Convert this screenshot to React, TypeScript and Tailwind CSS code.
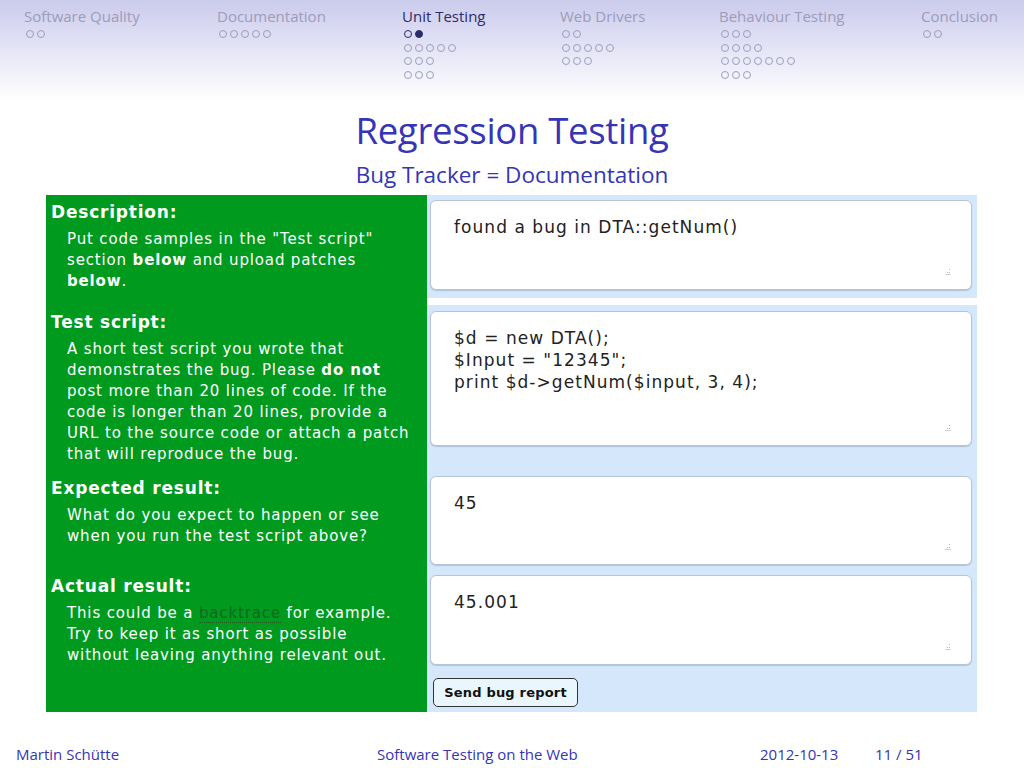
import React from 'react';

type Section = {
  title: string;
  width: string;
  rows: number[];
  active?: boolean;
};

const sections: Section[] = [
  { title: 'Software Quality', width: 'w-[193px]', rows: [2] },
  { title: 'Documentation', width: 'w-[185px]', rows: [5] },
  { title: 'Unit Testing', width: 'w-[158px]', rows: [2, 5, 3, 3], active: true },
  { title: 'Web Drivers', width: 'w-[159px]', rows: [2, 5, 3] },
  { title: 'Behaviour Testing', width: 'w-[202px]', rows: [3, 4, 7, 3] },
  { title: 'Conclusion', width: 'w-[80px]', rows: [2] },
];

const sans = 'font-[Open_Sans,Noto_Sans,sans-serif]';
const deja = 'font-[DejaVu_Sans,Verdana,sans-serif]';

function Dots({ count, activeRow }: { count: number; activeRow: boolean }) {
  return (
    <div className="flex h-[13.7px] items-center gap-[3px] pl-[2px]">
      {Array.from({ length: count }).map((_, i) => {
        const filled = activeRow && i === 1;
        return (
          <span
            key={i}
            className={`block h-[8px] w-[8px] rounded-full border-[1.5px] ${
              activeRow ? 'border-[#2c2c6c]' : 'border-[#9d9dc0]'
            } ${filled ? 'bg-[#2c2c6c]' : ''}`}
          />
        );
      })}
    </div>
  );
}

function Grip() {
  return (
    <svg width="6" height="6" viewBox="0 0 6 6" className="absolute bottom-[14px] right-[20px]">
      <rect x="4" y="0" width="1" height="1" fill="#b8b8b8" />
      <rect x="2" y="3" width="1" height="1" fill="#b8b8b8" />
      <rect x="4" y="3" width="1" height="1" fill="#b8b8b8" />
      <rect x="0" y="5" width="6" height="1" fill="#d0d0d0" />
    </svg>
  );
}

function Box({ height, children }: { height: string; children: React.ReactNode }) {
  return (
    <div
      className={`relative ${height} w-[542px] rounded-[6px] border border-[#b7c4d8] bg-white pl-[23px] pt-[15px] ${deja} text-[17px] leading-[22px] tracking-[1.05px] text-[#222] shadow-[0_1px_1px_rgba(120,140,170,0.4)]`}
    >
      {children}
      <Grip />
    </div>
  );
}

function Label({ title, children }: { title: string; children: React.ReactNode }) {
  return (
    <div className={`${deja} text-white`}>
      <div className="pl-[5px] text-[17px] font-bold leading-[22px] tracking-[0.8px]">{title}</div>
      <div className="mt-[6px] pl-[21px] text-[15px] leading-[21px] tracking-[0.85px]">{children}</div>
    </div>
  );
}

export default function App() {
  return (
    <div className="relative h-[768px] w-[1024px] overflow-hidden bg-white">
      {/* navigation header */}
      <div className="h-[100px] bg-gradient-to-b from-[#cbcbec] to-[#ffffff] pl-[24px] pt-[6px]">
        <div className="flex">
          {sections.map((s) => (
            <div key={s.title} className={`${s.width} shrink-0`}>
              <div
                className={`${sans} text-[15px] leading-[20px] ${
                  s.active ? 'text-[#2c2c6c]' : 'text-[#9c9cbb]'
                }`}
              >
                {s.title}
              </div>
              <div className="mt-[1px]">
                {s.rows.map((n, i) => (
                  <Dots key={i} count={n} activeRow={!!s.active && i === 0} />
                ))}
              </div>
            </div>
          ))}
        </div>
      </div>

      {/* title */}
      <div className={`${sans} mt-[8px] text-center text-[#3535b5]`}>
        <div className="text-[36.5px] leading-[44px] tracking-[-0.3px]">Regression Testing</div>
        <div className="mt-[9px] text-[22.5px] leading-[28px]">Bug Tracker = Documentation</div>
      </div>

      {/* bug form */}
      <div className="ml-[46px] mt-[6px] grid w-[931px] grid-cols-[381px_550px]">
        <div className="h-[110px] bg-[#009a1f] pt-[6px]">
          <Label title="Description:">
            Put code samples in the "Test script"
            <br />
            section <b>below</b> and upload patches
            <br />
            <b>below</b>.
          </Label>
        </div>
        <div className="h-[110px] border-b-[7px] border-white bg-[#d5e8fb] pl-[3px] pt-[5px]">
          <Box height="h-[90px]">found a bug in DTA::getNum()</Box>
        </div>

        <div className="h-[165px] bg-[#009a1f] pt-[6px]">
          <Label title="Test script:">
            A short test script you wrote that
            <br />
            demonstrates the bug. Please <b>do not</b>
            <br />
            post more than 20 lines of code. If the
            <br />
            code is longer than 20 lines, provide a
            <br />
            URL to the source code or attach a patch
            <br />
            that will reproduce the bug.
          </Label>
        </div>
        <div className="h-[165px] bg-[#d5e8fb] pl-[3px] pt-[6px]">
          <Box height="h-[135px]">
            $d = new DTA();
            <br />
            $Input = "12345";
            <br />
            print $d-&gt;getNum($input, 3, 4);
          </Box>
        </div>

        <div className="h-[100px] bg-[#009a1f] pt-[7px]">
          <Label title="Expected result:">
            What do you expect to happen or see
            <br />
            when you run the test script above?
          </Label>
        </div>
        <div className="h-[100px] bg-[#d5e8fb] pl-[3px] pt-[6px]">
          <Box height="h-[89px]">45</Box>
        </div>

        <div className="h-[100px] bg-[#009a1f] pt-[5px]">
          <Label title="Actual result:">
            This could be a{' '}
            <span className="border-b border-dotted border-[#1a5a1a] text-[#0d6a1c]">backtrace</span> for
            example.
            <br />
            Try to keep it as short as possible
            <br />
            without leaving anything relevant out.
          </Label>
        </div>
        <div className="h-[100px] bg-[#d5e8fb] pl-[3px] pt-[5px]">
          <Box height="h-[90px]">45.001</Box>
        </div>

        <div className="h-[42px] bg-[#009a1f]" />
        <div className="h-[42px] bg-[#d5e8fb] pl-[6px] pt-[8px]">
          <button
            className={`h-[29px] w-[145px] rounded-[5px] border-[1.5px] border-[#333] bg-[#eaf6fd] ${deja} text-[13px] font-bold tracking-[0.2px] text-[#111]`}
          >
            Send bug report
          </button>
        </div>
      </div>

      {/* footer */}
      <div className={`mt-[32px] flex ${sans} text-[15px] leading-[20px] text-[#3535b5]`}>
        <div className="w-[377px] pl-[16px]">Martin Schütte</div>
        <div className="w-[383px]">Software Testing on the Web</div>
        <div className="w-[115px]">2012-10-13</div>
        <div>11 / 51</div>
      </div>
    </div>
  );
}
